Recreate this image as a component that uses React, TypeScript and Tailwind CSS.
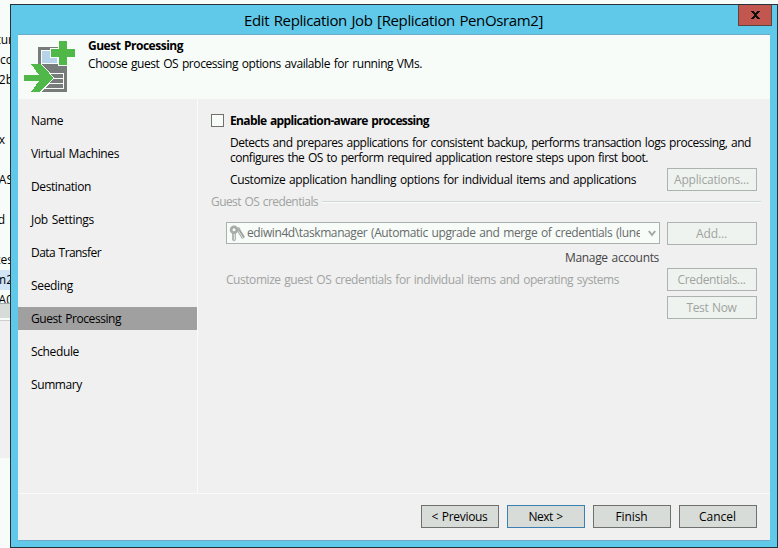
import { useLayoutEffect, useRef } from 'react';
import clsx from 'clsx';

type LabelProps = { text: string; width: number; className?: string };

/* A single line of text whose tracking is adjusted to fill a given width. */
function Label({ text, width, className }: LabelProps) {
  const ref = useRef<HTMLSpanElement>(null);
  useLayoutEffect(() => {
    const el = ref.current;
    if (!el) return;
    el.style.letterSpacing = '0px';
    const natural = el.getBoundingClientRect().width;
    el.style.letterSpacing = `${(width - natural) / text.length}px`;
  }, [text, width]);
  return (
    <span ref={ref} className={clsx('inline-block whitespace-pre [word-spacing:1px]', className)}>
      {text}
    </span>
  );
}

const steps: [string, number][] = [
  ['Name', 32],
  ['Virtual Machines', 88],
  ['Destination', 60],
  ['Job Settings', 63],
  ['Data Transfer', 70],
  ['Seeding', 42],
  ['Guest Processing', 90],
  ['Schedule', 48],
  ['Summary', 51],
];

const backgroundRows = ['tur', 'co', '2b', '', '', 'x', '', 'AS', '', 'd', '', 'tes', 'm2', 'A0'];

function BackgroundWindow() {
  return (
    <div className="flex w-[10px] shrink-0 flex-col overflow-hidden bg-[#f7fcf9]">
      <div className="flex h-[303px] flex-col overflow-hidden pt-[30px]">
        {backgroundRows.map((row, i) => (
          <div
            key={i}
            className={clsx(
              'flex h-5 shrink-0 items-center justify-end overflow-hidden whitespace-pre text-[12px]',
              row === 'm2' && 'bg-[#d2e5f7]',
              row.length < 2 && 'pr-[5px]',
            )}
          >
            <span className={clsx(row.length > 1 && '-mr-[3px]')}>{row}</span>
          </div>
        ))}
      </div>
      <div className="h-[15px] border-t border-[#a5aaa7] bg-[#d7dcd8]" />
      <div className="mt-[2px] h-[138px] border-t border-[#cdcdcd] bg-[#f0f0f0]" />
    </div>
  );
}

function ReplicaIcon() {
  return (
    <svg width="52" height="52" viewBox="0 0 52 52" shapeRendering="crispEdges">
      <path d="M14 6h29v45H14z" fill="#777b79" />
      <path d="M17 9h17v14H17z" fill="#f7fcf9" />
      <path d="M18 10h15v12H18z" fill="#b6d3ea" />
      <path d="M26 32.5h13.5v15H21" fill="none" stroke="#f7fcf9" />
      <path d="M29 37.5h10M25 42.5h14" stroke="#f7fcf9" />
      <path d="M34 -1h10v8h8v10h-8v8H34v-8h-8V7h8z" fill="#f7fcf9" />
      <path d="M35 0h8v8h8v8h-8v8h-8v-8h-8V8h8z" fill="#4fb848" />
      <path d="M14 23h4l12.5 14L17 52h-3z" fill="#f7fcf9" />
      <path d="M0 34h15L7 23h10l12.5 14L16 51H7l8-11H0z" fill="#4fb848" />
    </svg>
  );
}

function KeysIcon() {
  return (
    <svg width="17" height="17" viewBox="0 0 17 17">
      <path d="M9.5 5l5 8" stroke="#9da19f" strokeWidth="3.4" />
      <path d="M9.5 6l5 8" stroke="#dfe3e1" strokeWidth="1" />
      <circle cx="9.5" cy="4" r="1.8" fill="#aeb2b0" />
      <path d="M3 7h4v8l-2 1.5L3 15z" fill="#b4b8b6" />
      <circle cx="5" cy="4.7" r="2.9" fill="#f7fcf9" stroke="#a7aba9" strokeWidth="2.8" />
      <path d="M5.5 9v6" stroke="#dce0de" />
    </svg>
  );
}

function SideButton({ text, width, className }: LabelProps) {
  return (
    <button
      disabled
      className={clsx(
        'flex h-[23px] w-[90px] shrink-0 items-center justify-center border border-[#adb2b0] bg-[#eff3ef] pr-px text-[#a0a3a1]',
        className,
      )}
    >
      <Label text={text} width={width} />
    </button>
  );
}

function FooterButton({ text, width, className }: LabelProps) {
  return (
    <button
      className={clsx(
        'flex h-[23px] w-[78px] items-center justify-center border bg-[#d8dcd8] pr-px',
        className ?? 'border-[#707070]',
      )}
    >
      <Label text={text} width={width} />
    </button>
  );
}

function TitleBar() {
  return (
    <div className="flex h-[29px] items-start">
      <div className="flex h-[29px] flex-1 items-center pl-[233px] text-[15px]">
        <Label text="Edit Replication Job [Replication PenOsram2]" width={299} />
      </div>
      <button className="mr-[5px] flex h-[21px] w-[34px] items-center justify-center border border-t-0 border-[#5c4540] bg-[#c1574e]">
        <svg width="9" height="8" viewBox="0 0 9 8" shapeRendering="crispEdges">
          <path d="M0 0h3v1h1v1h1V1h1V0h3v1H8v1H7v1H6v2h1v1h1v1h1v1H6V7H5V6H4v1H3v1H0V7h1V6h1V5h1V3H2V2H1V1H0z" fill="#111" />
        </svg>
      </button>
    </div>
  );
}

function Options() {
  return (
    <main className="flex min-w-0 flex-1 flex-col pl-[13px]">
      <div className="mt-[14px] flex h-4 items-start">
        <span className="mt-px mr-[6px] h-[13px] w-[13px] border border-[#707070] bg-[#f7fcf9]" />
        <Label text="Enable application-aware processing" width={199} className="font-bold" />
      </div>
      <div className="mt-[6px] flex h-[30px] flex-col items-start pl-[19px] leading-[15px]">
        <Label text="Detects and prepares applications for consistent backup, performs transaction logs processing, and" width={521} />
        <Label text="configures the OS to perform required application restore steps upon first boot." width={418} />
      </div>
      <div className="mt-[3px] flex h-[23px] items-center pl-[19px]">
        <div className="w-[437px]">
          <Label text="Customize application handling options for individual items and applications" width={406} />
        </div>
        <SideButton text="Applications..." width={75} />
      </div>
      <div className="mt-[3px] flex h-4 items-center text-[#a0a3a1]">
        <Label text="Guest OS credentials" width={107} />
        <span className="ml-1 h-[2px] w-[439px] border-b border-[#f7fcf9] bg-[#cfdad7]" />
      </div>
      <div className="mt-[12px] flex pl-[15px]">
        <div className="mr-[7px] flex h-[22px] w-[434px] items-center overflow-hidden border border-[#a9b1ae] bg-[#f7fcf9] pl-[2px] text-[#686b6a]">
          <KeysIcon />
          <div className="ml-px w-[393px] overflow-hidden">
            <Label text="ediwin4d\taskmanager (Automatic upgrade and merge of credentials (lune" width={395} />
          </div>
          <svg className="ml-[8px]" width="8" height="7" viewBox="0 0 8 7">
            <path d="M.8 1L4 5 7.2 1" fill="none" stroke="#a3a8a6" strokeWidth="2" />
          </svg>
        </div>
        <SideButton text="Add..." width={31} />
      </div>
      <div className="mt-[3px] flex h-5 w-[448px] items-center justify-end text-[#454545]">
        <Label text="Manage accounts" width={94} />
      </div>
      <div className="flex h-[23px] items-center pl-[15px] text-[#a0a3a1]">
        <div className="w-[441px]">
          <Label text="Customize guest OS credentials for individual items and operating systems" width={393} />
        </div>
        <SideButton text="Credentials..." width={68} />
      </div>
      <SideButton text="Test Now" width={50} className="mt-[5px] ml-[456px]" />
    </main>
  );
}

export default function App() {
  return (
    <div className="flex h-[548px] w-[778px] overflow-hidden bg-[#f7fcf9] font-['Open_Sans','Noto_Sans',sans-serif] text-[12px] leading-4 text-black">
      <BackgroundWindow />
      <div className="mt-1 flex h-[544px] w-[768px] flex-col border border-[#27333a] bg-[#60c8e8]">
        <TitleBar />
        <div className="mx-[7px] flex h-[507px] w-[752px] flex-col border-t border-b border-[#6fabc9] bg-[#f0f0f0]">
          <header className="flex h-16 shrink-0 bg-[#f7fcf9] pt-[6px] pl-[6px]">
            <ReplicaIcon />
            <div className="-mt-[3px] ml-[12px] flex flex-col items-start">
              <Label text="Guest Processing" width={95} className="font-bold" />
              <Label text="Choose guest OS processing options available for running VMs." width={334} className="mt-[2px]" />
            </div>
          </header>
          <div className="flex h-[394px] shrink-0">
            <nav className="flex w-[180px] shrink-0 flex-col gap-[10px] border-r border-[#fafafa] pt-[10px]">
              {steps.map(([name, width]) => (
                <div
                  key={name}
                  className={clsx('flex h-[23px] items-center pl-[13px]', name === 'Guest Processing' && 'bg-[#a0a0a0]')}
                >
                  <Label text={name} width={width} />
                </div>
              ))}
            </nav>
            <Options />
          </div>
          <footer className="flex flex-1 items-start justify-end gap-2 border-t border-[#fafafa] pt-[11px] pr-[13px]">
            <FooterButton text="< Previous" width={56} />
            <FooterButton text="Next >" width={34} className="border-[#3c7fb1]" />
            <FooterButton text="Finish" width={32} />
            <FooterButton text="Cancel" width={37} />
          </footer>
        </div>
      </div>
    </div>
  );
}
